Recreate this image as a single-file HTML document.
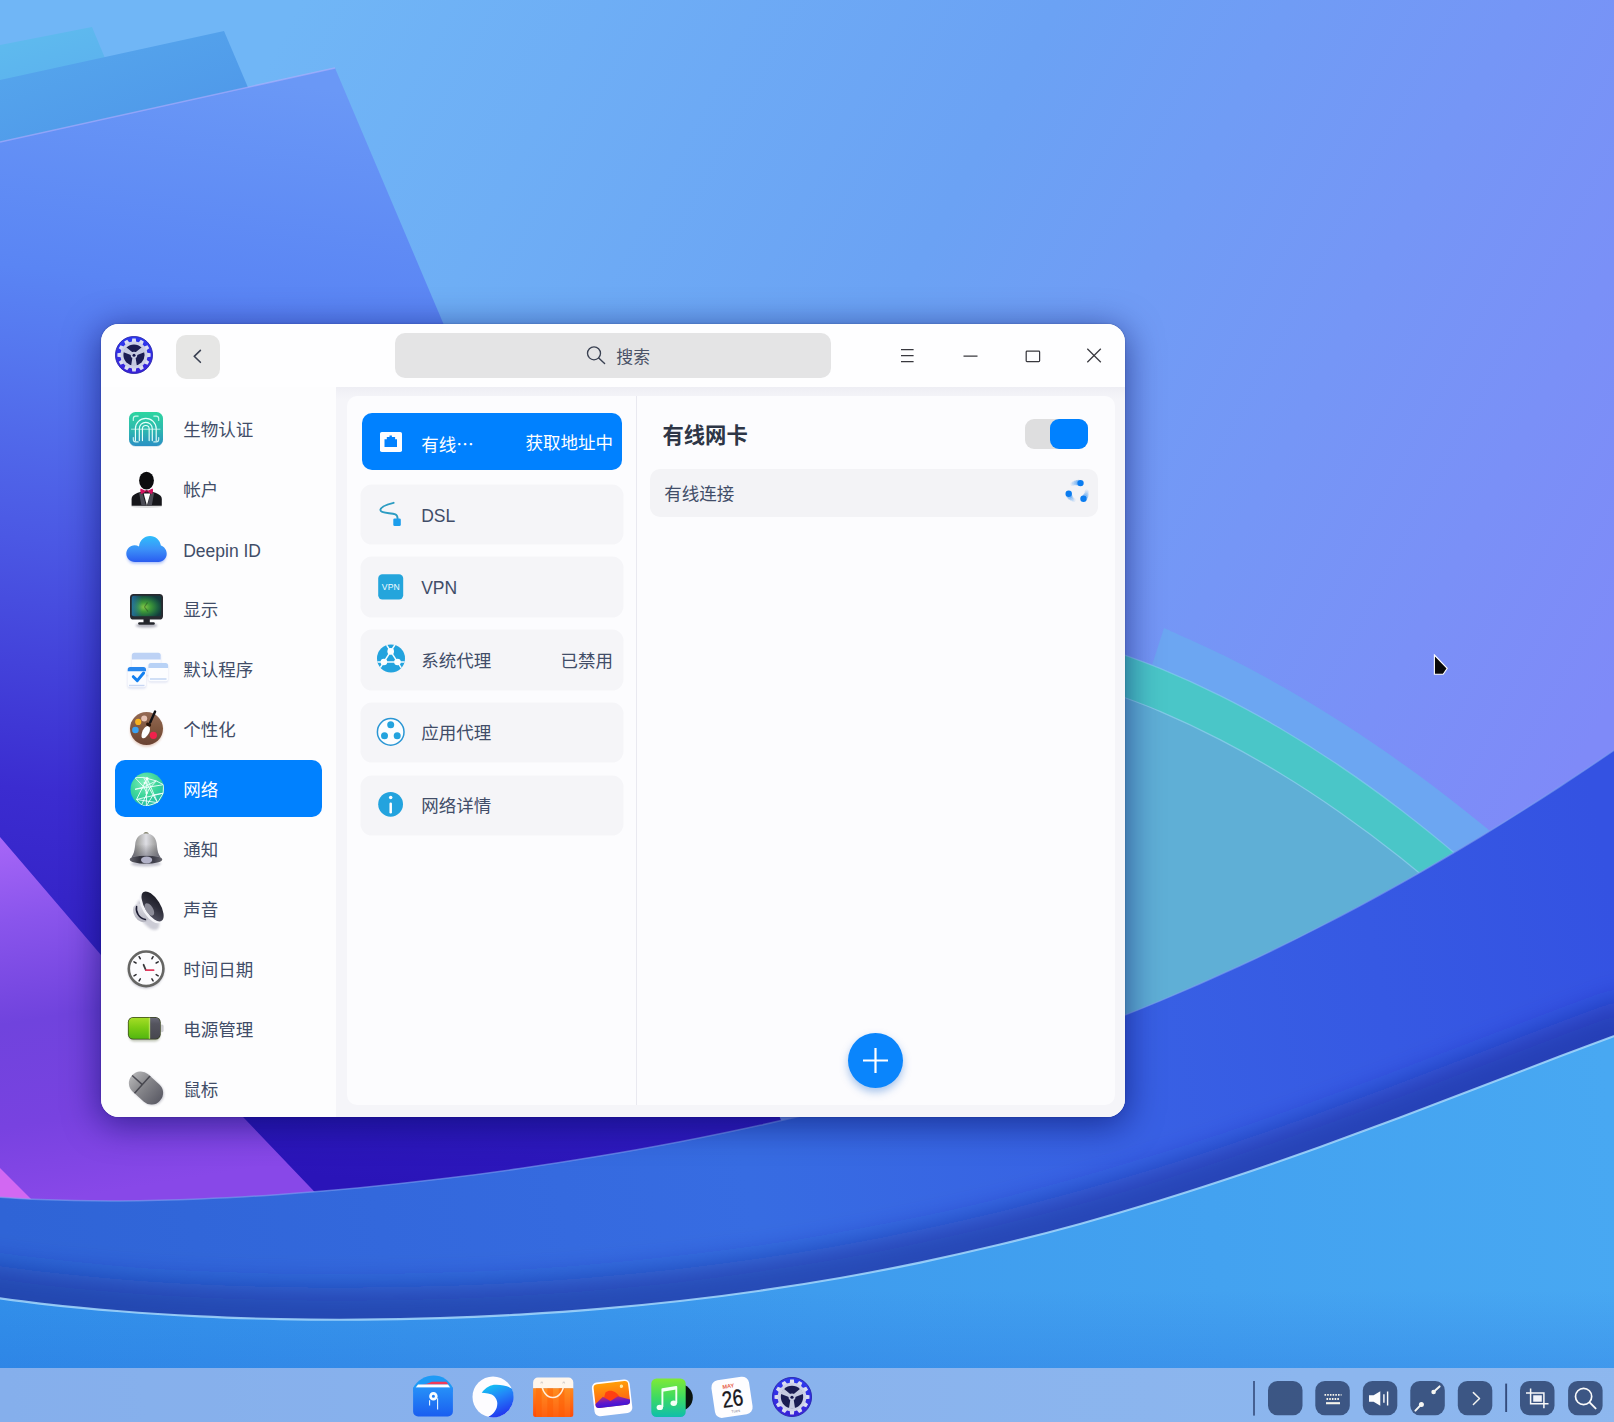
<!DOCTYPE html>
<html lang="zh-CN"><head><meta charset="utf-8"><title>控制中心 - 网络</title>
<style>
html,body{margin:0;padding:0}
body{width:1614px;height:1422px;overflow:hidden;position:relative;background:#6BA2F4;font-family:"Liberation Sans","Noto Sans CJK SC",sans-serif;font-size:17.5px;color:#414D68}
#wall{position:absolute;left:0;top:0;display:block}
.abs{position:absolute}
</style></head><body>
<svg id="wall" width="1614" height="1422" viewBox="0 0 1614 1422">
<defs>
<linearGradient id="gBase" gradientUnits="userSpaceOnUse" x1="300" y1="0" x2="1614" y2="700">
<stop offset="0" stop-color="#70B6F6"/><stop offset="0.45" stop-color="#6BA2F4"/><stop offset="1" stop-color="#7F8AF8"/>
</linearGradient>
<linearGradient id="gP3" gradientUnits="userSpaceOnUse" x1="0" y1="30" x2="40" y2="160">
<stop offset="0" stop-color="#5FBCEE"/><stop offset="1" stop-color="#58A8EE"/>
</linearGradient>
<linearGradient id="gP2" gradientUnits="userSpaceOnUse" x1="100" y1="30" x2="160" y2="200">
<stop offset="0" stop-color="#55A5EC"/><stop offset="1" stop-color="#4C92E8"/>
</linearGradient>
<linearGradient id="gP1" gradientUnits="userSpaceOnUse" x1="260" y1="80" x2="120" y2="1150">
<stop offset="0" stop-color="#6A98F6"/><stop offset="0.2" stop-color="#5A85F4"/><stop offset="0.45" stop-color="#4B58E4"/><stop offset="0.68" stop-color="#3B2CD0"/><stop offset="1" stop-color="#2A14B8"/>
</linearGradient>
<linearGradient id="gPur" gradientUnits="userSpaceOnUse" x1="0" y1="840" x2="60" y2="1200">
<stop offset="0" stop-color="#A666F7"/><stop offset="0.22" stop-color="#8A55EC"/><stop offset="0.5" stop-color="#7043DD"/><stop offset="0.78" stop-color="#7842E0"/><stop offset="1" stop-color="#8848E8"/>
</linearGradient>
<linearGradient id="gBand" gradientUnits="userSpaceOnUse" x1="0" y1="1200" x2="1614" y2="900">
<stop offset="0" stop-color="#2F64D6"/><stop offset="0.45" stop-color="#376CE2"/><stop offset="0.7" stop-color="#3860E4"/><stop offset="1" stop-color="#3452E2"/>
</linearGradient>
<linearGradient id="gLight" gradientUnits="userSpaceOnUse" x1="0" y1="1300" x2="1614" y2="1150">
<stop offset="0" stop-color="#3290EA"/><stop offset="0.5" stop-color="#3E9CEE"/><stop offset="1" stop-color="#48A8F2"/>
</linearGradient>
<linearGradient id="gLightSh" gradientUnits="userSpaceOnUse" x1="0" y1="1290" x2="0" y2="1370">
<stop offset="0" stop-color="#2060D8" stop-opacity="0"/><stop offset="1" stop-color="#2060D8" stop-opacity="0.22"/></linearGradient>
<linearGradient id="gBandSh" gradientUnits="userSpaceOnUse" x1="0" y1="1200" x2="0" y2="1320">
<stop offset="0" stop-color="#1B2E90" stop-opacity="0"/><stop offset="1" stop-color="#1B2E90" stop-opacity="0.45"/>
</linearGradient>
<filter id="fBlur" x="-10%" y="-30%" width="120%" height="160%"><feGaussianBlur stdDeviation="14"/></filter>
</defs>
<rect width="1614" height="1422" fill="url(#gBase)"/>
<polygon points="0,45 92,27 160,190 0,230" fill="url(#gP3)"/>
<polygon points="0,80 224,31 300,210 0,300" fill="url(#gP2)"/>
<polygon points="0,142 335,68 800,1165 0,1300" fill="url(#gP1)"/>
<path d="M0,142L335,68" stroke="#B9B0FF" stroke-opacity="0.55" stroke-width="1.6" fill="none"/>
<polygon points="0,837 101,955 244,1118 330,1208 0,1210" fill="url(#gPur)"/>
<polygon points="0,1168 32,1200 0,1204" fill="#D268F2"/>
<path d="M1164.0,627.9 C1174.0,632.5 1204.0,645.6 1224.0,655.6 C1244.0,665.5 1264.0,676.2 1284.0,687.6 C1304.0,699.0 1324.0,711.2 1344.0,724.0 C1364.0,736.9 1384.0,750.5 1404.0,764.8 C1424.0,779.1 1444.0,794.2 1464.0,809.9 C1484.0,825.7 1504.0,842.2 1524.0,859.4 C1544.0,876.7 1574.0,904.3 1584.0,913.3 L1572.0,962.2 C1562.0,952.5 1532.0,922.5 1512.0,903.9 C1492.0,885.4 1472.0,867.7 1452.0,850.9 C1432.0,834.1 1412.0,818.2 1392.0,803.2 C1372.0,788.2 1352.0,774.0 1332.0,760.7 C1312.0,747.5 1292.0,735.1 1272.0,723.6 C1252.0,712.1 1232.0,701.5 1212.0,691.7 C1192.0,682.0 1162.0,669.6 1152.0,665.2 Z" fill="#6CA6F2"/>
<path d="M1100.0,646.4 C1110.0,650.1 1140.0,660.2 1160.0,668.4 C1180.0,676.6 1200.0,685.7 1220.0,695.7 C1240.0,705.6 1260.0,716.5 1280.0,728.2 C1300.0,740.0 1320.0,752.6 1340.0,766.1 C1360.0,779.6 1380.0,794.0 1400.0,809.2 C1420.0,824.5 1440.0,840.7 1460.0,857.7 C1480.0,874.7 1510.0,902.5 1520.0,911.4 L1520.0,963.0 C1510.0,953.8 1480.0,925.0 1460.0,907.4 C1440.0,889.7 1420.0,873.0 1400.0,857.2 C1380.0,841.4 1360.0,826.5 1340.0,812.5 C1320.0,798.5 1300.0,785.4 1280.0,773.3 C1260.0,761.1 1240.0,749.9 1220.0,739.6 C1200.0,729.2 1180.0,719.8 1160.0,711.3 C1140.0,702.8 1110.0,692.4 1100.0,688.6 Z" fill="#4AC6C8"/>
<path d="M1100.0,688.6 C1110.0,692.4 1140.0,702.8 1160.0,711.3 C1180.0,719.8 1200.0,729.2 1220.0,739.6 C1240.0,749.9 1260.0,761.1 1280.0,773.3 C1300.0,785.4 1320.0,798.5 1340.0,812.5 C1360.0,826.5 1380.0,841.4 1400.0,857.2 C1420.0,873.0 1440.0,889.7 1460.0,907.4 C1480.0,925.0 1510.0,953.8 1520.0,963.0 L1600,1200 L1100,1200 Z" fill="#5FAFD6"/>
<path d="M1100.0,646.4 C1110.0,650.1 1140.0,660.2 1160.0,668.4 C1180.0,676.6 1200.0,685.7 1220.0,695.7 C1240.0,705.6 1260.0,716.5 1280.0,728.2 C1300.0,740.0 1320.0,752.6 1340.0,766.1 C1360.0,779.6 1380.0,794.0 1400.0,809.2 C1420.0,824.5 1440.0,840.7 1460.0,857.7 C1480.0,874.7 1510.0,902.5 1520.0,911.4" fill="none" stroke="#8FD8F4" stroke-opacity="0.5" stroke-width="1.3"/>
<path d="M1100.0,688.6 C1110.0,692.4 1140.0,702.8 1160.0,711.3 C1180.0,719.8 1200.0,729.2 1220.0,739.6 C1240.0,749.9 1260.0,761.1 1280.0,773.3 C1300.0,785.4 1320.0,798.5 1340.0,812.5 C1360.0,826.5 1380.0,841.4 1400.0,857.2 C1420.0,873.0 1440.0,889.7 1460.0,907.4 C1480.0,925.0 1510.0,953.8 1520.0,963.0" fill="none" stroke="#9AE0F0" stroke-opacity="0.55" stroke-width="1.3"/>
<path d="M-40.0,1194.2 C-26.7,1195.1 13.3,1198.5 40.0,1199.6 C66.7,1200.7 93.3,1201.0 120.0,1200.9 C146.7,1200.8 173.3,1200.1 200.0,1199.0 C226.7,1198.0 253.3,1196.4 280.0,1194.5 C306.7,1192.6 333.3,1190.3 360.0,1187.8 C386.7,1185.2 413.3,1182.3 440.0,1179.1 C466.7,1175.9 493.3,1172.4 520.0,1168.5 C546.7,1164.7 573.3,1160.6 600.0,1156.1 C626.7,1151.7 653.3,1146.9 680.0,1141.8 C706.7,1136.6 733.3,1131.2 760.0,1125.3 C786.7,1119.4 813.3,1113.1 840.0,1106.4 C866.7,1099.6 893.3,1092.4 920.0,1084.7 C946.7,1077.0 973.3,1068.9 1000.0,1060.2 C1026.7,1051.4 1053.3,1042.2 1080.0,1032.3 C1106.7,1022.4 1133.3,1012.0 1160.0,1000.9 C1186.7,989.8 1213.3,978.1 1240.0,965.8 C1266.7,953.4 1293.3,940.4 1320.0,926.7 C1346.7,913.1 1373.3,898.8 1400.0,883.8 C1426.7,868.8 1453.3,853.2 1480.0,837.0 C1506.7,820.8 1533.3,803.9 1560.0,786.5 C1586.7,769.1 1626.7,741.7 1640.0,732.7 L1700,1500 L-60,1500 Z" fill="url(#gBand)"/>
<path d="M-40.0,1292.8 C-26.7,1294.6 13.3,1300.5 40.0,1303.6 C66.7,1306.7 93.3,1309.2 120.0,1311.3 C146.7,1313.5 173.3,1315.1 200.0,1316.4 C226.7,1317.7 253.3,1318.5 280.0,1319.1 C306.7,1319.6 333.3,1319.8 360.0,1319.6 C386.7,1319.5 413.3,1319.0 440.0,1318.1 C466.7,1317.3 493.3,1316.1 520.0,1314.6 C546.7,1313.0 573.3,1311.2 600.0,1308.9 C626.7,1306.6 653.3,1304.0 680.0,1301.0 C706.7,1298.0 733.3,1294.6 760.0,1290.7 C786.7,1286.9 813.3,1282.7 840.0,1278.0 C866.7,1273.3 893.3,1268.2 920.0,1262.6 C946.7,1257.0 973.3,1251.0 1000.0,1244.6 C1026.7,1238.1 1053.3,1231.2 1080.0,1223.9 C1106.7,1216.5 1133.3,1208.7 1160.0,1200.5 C1186.7,1192.4 1213.3,1183.7 1240.0,1174.8 C1266.7,1165.9 1293.3,1156.5 1320.0,1147.0 C1346.7,1137.4 1373.3,1127.5 1400.0,1117.5 C1426.7,1107.5 1453.3,1097.2 1480.0,1087.0 C1506.7,1076.8 1533.3,1066.4 1560.0,1056.3 C1586.7,1046.2 1626.7,1031.4 1640.0,1026.5" fill="none" stroke="#16288C" stroke-opacity="0.5" stroke-width="64" filter="url(#fBlur)"/>
<path d="M-40.0,1194.2 C-26.7,1195.1 13.3,1198.5 40.0,1199.6 C66.7,1200.7 93.3,1201.0 120.0,1200.9 C146.7,1200.8 173.3,1200.1 200.0,1199.0 C226.7,1198.0 253.3,1196.4 280.0,1194.5 C306.7,1192.6 333.3,1190.3 360.0,1187.8 C386.7,1185.2 413.3,1182.3 440.0,1179.1 C466.7,1175.9 493.3,1172.4 520.0,1168.5 C546.7,1164.7 573.3,1160.6 600.0,1156.1 C626.7,1151.7 653.3,1146.9 680.0,1141.8 C706.7,1136.6 733.3,1131.2 760.0,1125.3 C786.7,1119.4 813.3,1113.1 840.0,1106.4 C866.7,1099.6 893.3,1092.4 920.0,1084.7 C946.7,1077.0 973.3,1068.9 1000.0,1060.2 C1026.7,1051.4 1053.3,1042.2 1080.0,1032.3 C1106.7,1022.4 1133.3,1012.0 1160.0,1000.9 C1186.7,989.8 1213.3,978.1 1240.0,965.8 C1266.7,953.4 1293.3,940.4 1320.0,926.7 C1346.7,913.1 1373.3,898.8 1400.0,883.8 C1426.7,868.8 1453.3,853.2 1480.0,837.0 C1506.7,820.8 1533.3,803.9 1560.0,786.5 C1586.7,769.1 1626.7,741.7 1640.0,732.7" fill="none" stroke="#7FA0F0" stroke-opacity="0.6" stroke-width="1.5"/>
<path d="M-40.0,1292.8 C-26.7,1294.6 13.3,1300.5 40.0,1303.6 C66.7,1306.7 93.3,1309.2 120.0,1311.3 C146.7,1313.5 173.3,1315.1 200.0,1316.4 C226.7,1317.7 253.3,1318.5 280.0,1319.1 C306.7,1319.6 333.3,1319.8 360.0,1319.6 C386.7,1319.5 413.3,1319.0 440.0,1318.1 C466.7,1317.3 493.3,1316.1 520.0,1314.6 C546.7,1313.0 573.3,1311.2 600.0,1308.9 C626.7,1306.6 653.3,1304.0 680.0,1301.0 C706.7,1298.0 733.3,1294.6 760.0,1290.7 C786.7,1286.9 813.3,1282.7 840.0,1278.0 C866.7,1273.3 893.3,1268.2 920.0,1262.6 C946.7,1257.0 973.3,1251.0 1000.0,1244.6 C1026.7,1238.1 1053.3,1231.2 1080.0,1223.9 C1106.7,1216.5 1133.3,1208.7 1160.0,1200.5 C1186.7,1192.4 1213.3,1183.7 1240.0,1174.8 C1266.7,1165.9 1293.3,1156.5 1320.0,1147.0 C1346.7,1137.4 1373.3,1127.5 1400.0,1117.5 C1426.7,1107.5 1453.3,1097.2 1480.0,1087.0 C1506.7,1076.8 1533.3,1066.4 1560.0,1056.3 C1586.7,1046.2 1626.7,1031.4 1640.0,1026.5 L1700,1500 L-60,1500 Z" fill="url(#gLight)"/>
<path d="M-40.0,1292.8 C-26.7,1294.6 13.3,1300.5 40.0,1303.6 C66.7,1306.7 93.3,1309.2 120.0,1311.3 C146.7,1313.5 173.3,1315.1 200.0,1316.4 C226.7,1317.7 253.3,1318.5 280.0,1319.1 C306.7,1319.6 333.3,1319.8 360.0,1319.6 C386.7,1319.5 413.3,1319.0 440.0,1318.1 C466.7,1317.3 493.3,1316.1 520.0,1314.6 C546.7,1313.0 573.3,1311.2 600.0,1308.9 C626.7,1306.6 653.3,1304.0 680.0,1301.0 C706.7,1298.0 733.3,1294.6 760.0,1290.7 C786.7,1286.9 813.3,1282.7 840.0,1278.0 C866.7,1273.3 893.3,1268.2 920.0,1262.6 C946.7,1257.0 973.3,1251.0 1000.0,1244.6 C1026.7,1238.1 1053.3,1231.2 1080.0,1223.9 C1106.7,1216.5 1133.3,1208.7 1160.0,1200.5 C1186.7,1192.4 1213.3,1183.7 1240.0,1174.8 C1266.7,1165.9 1293.3,1156.5 1320.0,1147.0 C1346.7,1137.4 1373.3,1127.5 1400.0,1117.5 C1426.7,1107.5 1453.3,1097.2 1480.0,1087.0 C1506.7,1076.8 1533.3,1066.4 1560.0,1056.3 C1586.7,1046.2 1626.7,1031.4 1640.0,1026.5 L1700,1500 L-60,1500 Z" fill="url(#gLightSh)"/>
<path d="M-40.0,1292.8 C-26.7,1294.6 13.3,1300.5 40.0,1303.6 C66.7,1306.7 93.3,1309.2 120.0,1311.3 C146.7,1313.5 173.3,1315.1 200.0,1316.4 C226.7,1317.7 253.3,1318.5 280.0,1319.1 C306.7,1319.6 333.3,1319.8 360.0,1319.6 C386.7,1319.5 413.3,1319.0 440.0,1318.1 C466.7,1317.3 493.3,1316.1 520.0,1314.6 C546.7,1313.0 573.3,1311.2 600.0,1308.9 C626.7,1306.6 653.3,1304.0 680.0,1301.0 C706.7,1298.0 733.3,1294.6 760.0,1290.7 C786.7,1286.9 813.3,1282.7 840.0,1278.0 C866.7,1273.3 893.3,1268.2 920.0,1262.6 C946.7,1257.0 973.3,1251.0 1000.0,1244.6 C1026.7,1238.1 1053.3,1231.2 1080.0,1223.9 C1106.7,1216.5 1133.3,1208.7 1160.0,1200.5 C1186.7,1192.4 1213.3,1183.7 1240.0,1174.8 C1266.7,1165.9 1293.3,1156.5 1320.0,1147.0 C1346.7,1137.4 1373.3,1127.5 1400.0,1117.5 C1426.7,1107.5 1453.3,1097.2 1480.0,1087.0 C1506.7,1076.8 1533.3,1066.4 1560.0,1056.3 C1586.7,1046.2 1626.7,1031.4 1640.0,1026.5" fill="none" stroke="#A6D8FC" stroke-opacity="0.85" stroke-width="2.1"/>
</svg>

<div id="dock" class="abs" style="left:0;top:1367.5px;width:1614px;height:54.5px;background:rgba(206,210,240,0.55)"></div>
<div class="abs" style="left:408.7px;top:1372.4px;width:48px;height:48px"><svg width="48" height="48" viewBox="0 0 48 48"><defs><linearGradient id="dfA" x1="0" y1="0" x2="0" y2="1"><stop offset="0" stop-color="#2690F8"/><stop offset="1" stop-color="#1A5EF0"/></linearGradient></defs>
<path d="M4.1,20V16C8,8 17,3.5 24.8,3.5C33,3.5 40,8 43.9,16V20Z" fill="#1E9AF6"/>
<path d="M18,11.8L22.9,9.7H37.3L39.5,12.6H12Z" fill="#F03A5A"/>
<path d="M9,12.4H39L41.3,15.8H6.6Z" fill="#FDFDFF"/>
<path d="M4.1,15.4H43.9V39.5a5,5 0 0 1 -5,5H9.1a5,5 0 0 1 -5,-5Z" fill="url(#dfA)"/>
<circle cx="24.4" cy="24.2" r="2.9" fill="none" stroke="#FAFEFF" stroke-width="2.7"/>
<path d="M20.6,28.3V33.4M28.6,26.2V37.5" stroke="#E8F6FF" stroke-width="1.1" fill="none"/>
</svg></div>
<div class="abs" style="left:468.6px;top:1372.6px;width:48px;height:48px"><svg width="48" height="48" viewBox="0 0 48 48"><defs><linearGradient id="dbA" x1="0.2" y1="0" x2="0.6" y2="1"><stop offset="0" stop-color="#12C4F2"/><stop offset="0.4" stop-color="#2288F8"/><stop offset="1" stop-color="#2230EE"/></linearGradient></defs>
<circle cx="24" cy="23.9" r="20.5" fill="#FDFCFF"/>
<path d="M12.7,19.8C17,14 22,11.6 27.5,11.8C33,12 39,13 43,15.8A20.5,20.5 0 0 1 19.2,43.8C25,41 28.5,36 28.3,30C28.1,25.5 24.5,21 19,20.4C16.5,20.1 14.5,20 12.7,19.8Z" fill="url(#dbA)"/>
</svg></div>
<div class="abs" style="left:528.5px;top:1372.5px;width:48px;height:48px"><svg width="48" height="48" viewBox="0 0 48 48"><defs><linearGradient id="dsA" x1="0" y1="0" x2="0" y2="1"><stop offset="0" stop-color="#FF8A1C"/><stop offset="1" stop-color="#FF4808"/></linearGradient><clipPath id="dsC"><path d="M4.1,15.2H44.3V41.6a2.5,2.5 0 0 1 -2.5,2.5H6.6a2.5,2.5 0 0 1 -2.5,-2.5Z"/></clipPath></defs>
<path d="M4.1,15.6V9.4a4.8,4.8 0 0 1 4.8,-4.8H39.5a4.8,4.8 0 0 1 4.8,4.8V15.6Z" fill="#FFF6EC"/>
<g clip-path="url(#dsC)"><rect x="4" y="15" width="41" height="30" fill="url(#dsA)"/><path d="M9.8,15V45M21.2,15V45M32.6,15V45" stroke="#FF6A0C" stroke-width="5.7" opacity="0.55"/><path d="M15.5,15V45M26.9,15V45M38.3,15V45" stroke="#FFA030" stroke-width="5.7" opacity="0.25"/></g>
<circle cx="12.8" cy="9.9" r="1.3" fill="#D8D0CC"/><circle cx="34.8" cy="9.9" r="1.3" fill="#D8D0CC"/>
<path d="M12.8,9.9C12.8,18 17.5,24.6 23.8,24.6C30.1,24.6 34.8,18 34.8,9.9" fill="none" stroke="#FFF4E6" stroke-width="1.5" opacity="0.95"/>
</svg></div>
<div class="abs" style="left:588.4px;top:1372.5px;width:48px;height:48px"><svg width="48" height="48" viewBox="0 0 48 48"><defs><linearGradient id="diA" x1="0" y1="0" x2="0" y2="1"><stop offset="0" stop-color="#FFA008"/><stop offset="0.6" stop-color="#FF7410"/><stop offset="1" stop-color="#F0502A"/></linearGradient><linearGradient id="diB" x1="0" y1="0" x2="0" y2="1"><stop offset="0" stop-color="#C0306A"/><stop offset="0.5" stop-color="#6418C8"/><stop offset="1" stop-color="#3412DC"/></linearGradient><clipPath id="diC"><rect x="-17.3" y="-15.2" width="34.8" height="23.8" rx="3.6"/></clipPath></defs>
<g transform="translate(24.1,24.8) rotate(-6.5)">
<rect x="-19" y="-16.9" width="38" height="33.8" rx="5.2" fill="#FFFDFF"/>
<g clip-path="url(#diC)"><rect x="-18" y="-16" width="36" height="25" fill="url(#diA)"/>
<path d="M-6,-6C-1,-9 5,-6 8,1L-10,4Z" fill="#FF3A12" opacity="0.9"/>
<path d="M-18,5L-9,-2L-2,3L6,-1L18,4V10H-18Z" fill="url(#diB)"/>
<circle cx="10.6" cy="-10.4" r="1.7" fill="#FFE9A0"/></g>
</g></svg></div>
<div class="abs" style="left:648.3px;top:1372.5px;width:48px;height:48px"><svg width="48" height="48" viewBox="0 0 48 48"><defs><linearGradient id="dmA" x1="0" y1="0" x2="0" y2="1"><stop offset="0" stop-color="#80EA36"/><stop offset="0.5" stop-color="#3CDA62"/><stop offset="1" stop-color="#0EBEAC"/></linearGradient></defs>
<circle cx="31.4" cy="24.4" r="13.4" fill="#0A1410"/>
<rect x="3.3" y="5.4" width="34.4" height="38.7" rx="5.2" fill="url(#dmA)"/>
<path d="M14.4,34V16.2L28.3,14V30" fill="none" stroke="#F4FFF6" stroke-width="1.9" stroke-linejoin="round"/>
<path d="M14.4,16.2L28.3,14V16.6L14.4,18.8Z" fill="#F4FFF6"/>
<ellipse cx="11.8" cy="34.4" rx="3.2" ry="2.7" fill="#F4FFF6"/><ellipse cx="25.7" cy="30.3" rx="3.2" ry="2.7" fill="#F4FFF6"/>
</svg></div>
<div class="abs" style="left:708.2px;top:1372.5px;width:48px;height:48px"><svg width="48" height="48" viewBox="0 0 48 48"><g transform="translate(24,24.3) rotate(-8.5)" font-family="Liberation Sans, sans-serif" text-anchor="middle">
<rect x="-19" y="-19" width="38" height="38" rx="7" fill="#FEFDFF"/>
<text x="-2" y="-9.6" font-size="5.6" font-weight="700" fill="#E8644C">MAY</text>
<text x="0.4" y="9.2" font-size="23" fill="#16161C" stroke="#16161C" stroke-width="0.35" transform="scale(0.82,1)">26</text>
<text x="1.6" y="15.4" font-size="4" fill="#8A8A94">Tues</text>
</g></svg></div>
<div class="abs" style="left:772.2px;top:1376.9px;width:40px;height:40px"><svg width="100%" height="100%" viewBox="0 0 38 38"><defs><linearGradient id="sgA" x1="0" y1="0" x2="0" y2="1"><stop offset="0" stop-color="#2C3AF0"/><stop offset="1" stop-color="#3A22D8"/></linearGradient></defs>
<circle cx="19" cy="19" r="18.6" fill="url(#sgA)" stroke="#2420A8" stroke-width="0.8"/>
<path d="M16.78,5.89 L17.25,2.39 L20.75,2.39 L21.22,5.89 L23.64,6.53 L25.79,3.74 L28.82,5.49 L27.48,8.75 L29.25,10.52 L32.51,9.18 L34.26,12.21 L31.47,14.36 L32.11,16.78 L35.61,17.25 L35.61,20.75 L32.11,21.22 L31.47,23.64 L34.26,25.79 L32.51,28.82 L29.25,27.48 L27.48,29.25 L28.82,32.51 L25.79,34.26 L23.64,31.47 L21.22,32.11 L20.75,35.61 L17.25,35.61 L16.78,32.11 L14.36,31.47 L12.21,34.26 L9.18,32.51 L10.52,29.25 L8.75,27.48 L5.49,28.82 L3.74,25.79 L6.53,23.64 L5.89,21.22 L2.39,20.75 L2.39,17.25 L5.89,16.78 L6.53,14.36 L3.74,12.21 L5.49,9.18 L8.75,10.52 L10.52,8.75 L9.18,5.49 L12.21,3.74 L14.36,6.53Z" fill="#DADDF2"/>
<circle cx="19" cy="19" r="13.5" fill="#CDD1E8"/>
<circle cx="19" cy="19" r="10.6" fill="#1A1C52"/>
<path d="M17.80,19.00 L16.10,30.00 L21.90,30.00 L20.20,19.00Z M19.60,17.96 L10.92,10.99 L8.02,16.01 L18.40,20.04Z M19.60,20.04 L29.98,16.01 L27.08,10.99 L18.40,17.96Z" fill="#C4C9E0"/>
<circle cx="19" cy="19" r="3.3" fill="#C4C9E0"/>
<circle cx="19" cy="19.2" r="1.5" fill="#14164E"/>
</svg></div>
<svg class="abs" style="left:1240px;top:1372px" width="374" height="50" viewBox="1240 1372 374 50">
<g fill="#38527F" fill-opacity="0.96">
<rect x="1253.2" y="1381" width="1.6" height="34.6" fill="#304878"/>
<rect x="1268" y="1380.9" width="34.5" height="34.3" rx="9.5"/>
<rect x="1315.3" y="1380.9" width="34.5" height="34.3" rx="9.5"/>
<rect x="1362.8" y="1380.9" width="34.5" height="34.3" rx="9.5"/>
<rect x="1410.3" y="1380.9" width="34.5" height="34.3" rx="9.5"/>
<rect x="1457.8" y="1380.9" width="34.5" height="34.3" rx="9.5"/>
<rect x="1505.2" y="1383.6" width="1.9" height="28.4" fill="#304878"/>
<rect x="1520" y="1380.9" width="34.5" height="34.3" rx="9.5"/>
<rect x="1568.1" y="1380.9" width="34.5" height="34.3" rx="9.5"/>
</g>
<g fill="none" stroke="#F6F4EA" stroke-width="1.9">
<path d="M1324.5,1394.9H1341.5M1326.5,1399H1339.5" stroke-dasharray="1.6 1.1"/>
<path d="M1326,1403.2H1340" stroke-width="2.1"/>
</g>
<path d="M1369,1395.2H1373.6L1380.3,1391.2V1405.8L1373.6,1401.8H1369Z" fill="#FDFDFD"/>
<path d="M1383.9,1394.2V1402.8M1387.6,1391.6V1405.4" stroke="#FDFDFD" stroke-width="1.4" fill="none"/>
<g stroke="#F6F6F2" stroke-width="2" stroke-linecap="round" fill="#F6F6F2">
<path d="M1434.6,1391L1439.6,1386.4M1420.4,1405.4L1415.4,1410.6"/>
<circle cx="1433.6" cy="1392" r="2.3" stroke="none"/><circle cx="1421.4" cy="1404.4" r="2.5" stroke="none"/>
</g>
<polyline points="1473.4,1392.6 1479.5,1398.5 1473.4,1404.5" fill="none" stroke="#F4F4F0" stroke-width="1.5" stroke-linecap="round" stroke-linejoin="round"/>
<g fill="none" stroke="#F8F8F8" stroke-width="1.5"><path d="M1530.6,1388.6V1403.8H1548.5M1526,1393H1543.9V1408.2"/></g>
<rect x="1533.2" y="1395.3" width="8.6" height="6.4" fill="#F2F4FA"/>
<circle cx="1583.6" cy="1396.5" r="8.1" fill="none" stroke="#FAFAFA" stroke-width="1.7"/>
<path d="M1589.6,1402.4L1595.6,1408.4" stroke="#FAFAFA" stroke-width="1.9" stroke-linecap="round"/>
</svg>

<div id="win" class="abs" style="left:101px;top:324px;width:1024px;height:793px;border-radius:18px;background:#FAFAFB;box-shadow:0 6px 34px 2px rgba(0,8,90,0.55),0 0 2px rgba(0,0,40,0.3);overflow:hidden">
<style>
#win .tb{position:absolute;left:0;top:0;width:1024px;height:62.5px;background:#FEFEFF}
#win .side{position:absolute;left:0;top:62.5px;width:235px;height:731px;background:#FDFDFE}
#win .content{position:absolute;left:234.5px;top:62.5px;width:790px;height:731px;background:linear-gradient(180deg,#EEEEF4 0,#F5F5F9 12px,#F5F5F9 100%)}
#win .col2{position:absolute;left:246px;top:71.5px;width:289px;height:709px;background:#FCFCFE;border-radius:10px 0 0 10px}
#win .col3{position:absolute;left:535px;top:71.5px;width:479px;height:709px;background:#FCFCFE;border-radius:0 10px 10px 0;border-left:1px solid #E9E9F0;box-sizing:border-box}
.sitem{position:absolute;left:14px;width:207px;height:57px;border-radius:10px;line-height:57px;white-space:nowrap}
.sitem .ic{position:absolute;left:7px;top:5px;width:48px;height:48px}
.sitem .tx{position:absolute;left:68.2px;top:2px}
.sitem.sel{background:#0081FF;color:#fff}
.mitem{position:absolute;left:261px;width:260px;height:57.5px;border-radius:10px;background:#F5F5F8;box-shadow:0 0 0 1.5px #F5F5F8;line-height:57.5px;white-space:nowrap}
.mitem .ic{position:absolute;left:12px;top:12px;width:34px;height:34px}
.mitem .tx{position:absolute;left:59.2px;top:1.6px}
.mitem .rt{position:absolute;right:9px;top:1.6px}
.mitem.sel{background:#0081FF;color:#fff;box-shadow:none;height:57px}
</style>
<div class="tb"></div>
<div class="side"></div>
<div class="content"></div>
<div class="col2"></div>
<div class="col3"></div>

<!-- title bar -->
<div class="abs" style="left:14px;top:12px;width:38px;height:38px"><svg width="100%" height="100%" viewBox="0 0 38 38"><defs><linearGradient id="sgA" x1="0" y1="0" x2="0" y2="1"><stop offset="0" stop-color="#2C3AF0"/><stop offset="1" stop-color="#3A22D8"/></linearGradient></defs>
<circle cx="19" cy="19" r="18.6" fill="url(#sgA)" stroke="#2420A8" stroke-width="0.8"/>
<path d="M16.78,5.89 L17.25,2.39 L20.75,2.39 L21.22,5.89 L23.64,6.53 L25.79,3.74 L28.82,5.49 L27.48,8.75 L29.25,10.52 L32.51,9.18 L34.26,12.21 L31.47,14.36 L32.11,16.78 L35.61,17.25 L35.61,20.75 L32.11,21.22 L31.47,23.64 L34.26,25.79 L32.51,28.82 L29.25,27.48 L27.48,29.25 L28.82,32.51 L25.79,34.26 L23.64,31.47 L21.22,32.11 L20.75,35.61 L17.25,35.61 L16.78,32.11 L14.36,31.47 L12.21,34.26 L9.18,32.51 L10.52,29.25 L8.75,27.48 L5.49,28.82 L3.74,25.79 L6.53,23.64 L5.89,21.22 L2.39,20.75 L2.39,17.25 L5.89,16.78 L6.53,14.36 L3.74,12.21 L5.49,9.18 L8.75,10.52 L10.52,8.75 L9.18,5.49 L12.21,3.74 L14.36,6.53Z" fill="#DADDF2"/>
<circle cx="19" cy="19" r="13.5" fill="#CDD1E8"/>
<circle cx="19" cy="19" r="10.6" fill="#1A1C52"/>
<path d="M17.80,19.00 L16.10,30.00 L21.90,30.00 L20.20,19.00Z M19.60,17.96 L10.92,10.99 L8.02,16.01 L18.40,20.04Z M19.60,20.04 L29.98,16.01 L27.08,10.99 L18.40,17.96Z" fill="#C4C9E0"/>
<circle cx="19" cy="19" r="3.3" fill="#C4C9E0"/>
<circle cx="19" cy="19.2" r="1.5" fill="#14164E"/>
</svg></div>
<div class="abs" style="left:75.3px;top:11px;width:43.5px;height:43.6px;border-radius:10px;background:#E6E6E5">
<svg width="43.5" height="43.6" viewBox="0 0 43.5 43.6"><polyline points="24.4,15.4 18.2,21.3 24.4,27.3" fill="none" stroke="#3A4152" stroke-width="1.6" stroke-linecap="round" stroke-linejoin="round"/></svg></div>
<div class="abs" style="left:294px;top:9px;width:436px;height:44.5px;border-radius:10px;background:#E4E4E5">
<svg class="abs" style="left:188px;top:10px" width="24" height="24" viewBox="0 0 24 24"><circle cx="11" cy="10.3" r="6.5" fill="none" stroke="#3A4152" stroke-width="1.35"/><line x1="15.7" y1="15" x2="21.6" y2="20.6" stroke="#3A4152" stroke-width="1.4" stroke-linecap="round"/></svg>
<div class="abs" style="left:221.3px;top:1.6px;line-height:45px;font-size:16.9px;color:#4A5266">搜索</div>
</div>
<svg class="abs" style="left:790px;top:15px" width="220" height="34" viewBox="0 0 220 34" fill="none" stroke="#38383E" stroke-width="1.25">
<line x1="10" y1="10.6" x2="22.6" y2="10.6"/><line x1="10" y1="16.6" x2="22.6" y2="16.6"/><line x1="10" y1="22.6" x2="22.6" y2="22.6"/>
<line x1="72.5" y1="17" x2="86.5" y2="17"/>
<rect x="135.2" y="12.2" width="13.4" height="10.4" rx="0.8"/>
<line x1="196.3" y1="9.8" x2="209.8" y2="23.2"/><line x1="209.8" y1="9.8" x2="196.3" y2="23.2"/>
</svg>

<!-- sidebar -->
<div class="sitem" style="top:76px"><div class="ic"><svg width="100%" height="100%" viewBox="0 0 48 48"><defs><linearGradient id="fgA" x1="0" y1="0" x2="0" y2="1"><stop offset="0" stop-color="#2ED6A0"/><stop offset="0.55" stop-color="#2DB6B0"/><stop offset="1" stop-color="#2A90C4"/></linearGradient></defs>
<rect x="7" y="7.6" width="34" height="34" rx="6.5" fill="#2A7FB0" opacity="0.35"/>
<rect x="7" y="7" width="34" height="34" rx="6.5" fill="url(#fgA)"/>
<g fill="none" stroke="#E8FFFA" stroke-width="1.15" stroke-linecap="round">
<path d="M11.3,15.5V13.5a2.4,2.4 0 0 1 2.4,-2.4H16.2M31.8,11.1H34.3a2.4,2.4 0 0 1 2.4,2.4V15.5M36.7,32.5V34.5a2.4,2.4 0 0 1 -2.4,2.4H31.8M16.2,36.9H13.7a2.4,2.4 0 0 1 -2.4,-2.4V32.5" stroke-opacity="0.85"/>
<path d="M13.4,35.6V23.8a10.4,10.4 0 0 1 20.8,0V35.6"/>
<path d="M17.3,35.6V23.8a6.5,6.5 0 0 1 13,0V35.6"/>
<path d="M20.45,35.6V23.8a3.35,3.35 0 0 1 6.7,0V35.6"/>
<path d="M9.5,24.2H38" stroke-width="0.9" stroke-opacity="0.8"/>
</g></svg></div><span class="tx">生物认证</span></div>
<div class="sitem" style="top:136px"><div class="ic"><svg width="100%" height="100%" viewBox="0 0 48 48">
<ellipse cx="24.6" cy="41.6" rx="15.5" ry="1.4" fill="#000" opacity="0.12"/>
<path d="M9.6,40.8V34.2C9.6,30.4 12.6,28.9 17.5,27.3L24.6,25.6L31.7,27.3C36.6,28.9 39.8,30.4 39.8,34.2V40.8Z" fill="#16161A"/>
<path d="M17.2,28.2L20.2,27.6L24,40.6H19.5Z" fill="#4C4C55"/>
<path d="M32,28.2L29,27.6L25.4,40.6H29.8Z" fill="#4C4C55"/>
<path d="M21.7,28.4H28.3L24.9,40.4Z" fill="#FDFDFD"/>
<ellipse cx="24.5" cy="15.6" rx="7.4" ry="8.9" fill="#0C0C0E"/>
<path d="M24.6,26.2L18.6,23.6C18,25.3 18.2,27.6 19.4,29.2ZM24.6,26.2L30.6,23.6C31.4,25.3 31.2,27.6 29.8,29.2Z" fill="#D0125E"/>
<circle cx="24.6" cy="26.2" r="1.3" fill="#8A0C40"/>
</svg></div><span class="tx">帐户</span></div>
<div class="sitem" style="top:196px"><div class="ic"><svg width="100%" height="100%" viewBox="0 0 48 48"><defs><linearGradient id="clA" x1="0" y1="0" x2="0" y2="1"><stop offset="0" stop-color="#2FBEFB"/><stop offset="0.5" stop-color="#3C92F8"/><stop offset="1" stop-color="#2A5CF0"/></linearGradient>
<filter id="clB" x="-20%" y="-20%" width="140%" height="160%"><feGaussianBlur stdDeviation="1.6"/></filter></defs>
<path d="M13,38.5C8,38.5 5.3,35 5.3,31C5.3,27 8,24 12.6,24H36.5C41,24 43.7,27 43.7,31C43.7,35 41,38.5 36.5,38.5Z" fill="#3A6CF0" opacity="0.45" filter="url(#clB)"/>
<path d="M13,37C8,37 4.3,33.2 4.3,28.6C4.3,24 8,20.2 12.6,20.2C14.2,20.2 15.7,20.6 17,21.4C17.6,15.6 22.2,11 28,11C33.6,11 38.2,15.2 38.9,20.6C42.3,21.8 44.7,25 44.7,28.8C44.7,33.4 41,37 36.5,37Z" fill="url(#clA)"/>
</svg></div><span class="tx" style="top:3px">Deepin ID</span></div>
<div class="sitem" style="top:256px"><div class="ic"><svg width="100%" height="100%" viewBox="0 0 48 48"><defs><radialGradient id="dpA" cx="0.42" cy="0.55" r="0.62"><stop offset="0" stop-color="#86C848"/><stop offset="0.35" stop-color="#3F9A38"/><stop offset="0.75" stop-color="#1C6040"/><stop offset="1" stop-color="#143A3C"/></radialGradient>
<linearGradient id="dpB" x1="0" y1="0" x2="1" y2="0"><stop offset="0" stop-color="#2878B8" stop-opacity="0.75"/><stop offset="0.35" stop-color="#2878B8" stop-opacity="0"/></linearGradient>
<filter id="dpC" x="-20%" y="-50%" width="140%" height="200%"><feGaussianBlur stdDeviation="1.3"/></filter></defs>
<ellipse cx="24.5" cy="40.5" rx="11" ry="2" fill="#202040" opacity="0.35" filter="url(#dpC)"/>
<rect x="21.5" y="33" width="6.3" height="5.5" fill="#22242A"/>
<rect x="16.2" y="37.3" width="16.6" height="2.5" rx="1.2" fill="#24262C"/>
<rect x="8" y="9" width="33" height="25.5" rx="3.6" fill="#282A30"/>
<rect x="9.8" y="10.8" width="29.4" height="20.4" rx="2" fill="url(#dpA)"/>
<rect x="9.8" y="10.8" width="29.4" height="20.4" rx="2" fill="url(#dpB)"/>
<path d="M25.5,17.5L22.5,22L26,26.5" fill="none" stroke="#163018" stroke-width="1.2" opacity="0.4"/>
</svg></div><span class="tx">显示</span></div>
<div class="sitem" style="top:316px"><div class="ic"><svg width="100%" height="100%" viewBox="0 0 48 48"><defs><filter id="daS" x="-20%" y="-20%" width="140%" height="150%"><feGaussianBlur stdDeviation="1"/></filter></defs>
<rect x="9.9" y="9" width="28.8" height="22" rx="2.5" fill="#8090D0" opacity="0.25" filter="url(#daS)"/>
<rect x="9.9" y="7.8" width="28.8" height="22" rx="2.5" fill="#FCFDFF"/>
<path d="M9.9,14.5V10.3a2.5,2.5 0 0 1 2.5,-2.5H36.2a2.5,2.5 0 0 1 2.5,2.5V14.5Z" fill="#BDD2F5"/>
<rect x="26.4" y="19.2" width="19.7" height="18.3" rx="2.5" fill="#8090D0" opacity="0.25" filter="url(#daS)"/>
<rect x="26.4" y="18" width="19.7" height="18.3" rx="2.5" fill="#FCFDFF"/>
<path d="M26.4,23V20.5a2.5,2.5 0 0 1 2.5,-2.5H43.6a2.5,2.5 0 0 1 2.5,2.5V23Z" fill="#B8D2F6"/>
<path d="M28,34H44.5" stroke="#C5D8F4" stroke-width="1.6"/>
<rect x="5.7" y="23.2" width="18.3" height="20.3" rx="2.5" fill="#8090D0" opacity="0.3" filter="url(#daS)"/>
<rect x="5.7" y="21.9" width="18.3" height="20.3" rx="2.5" fill="#FBFCFF"/>
<path d="M5.7,26.2V24.4a2.5,2.5 0 0 1 2.5,-2.5H21.5a2.5,2.5 0 0 1 2.5,2.5V26.2Z" fill="#2988EE"/>
<path d="M11.3,31.7L15.3,35.6L21.6,28" fill="none" stroke="#1380F0" stroke-width="3" stroke-linecap="round" stroke-linejoin="round"/>
<path d="M7,40.5H22.5" stroke="#C8D6F2" stroke-width="1.4"/>
</svg></div><span class="tx">默认程序</span></div>
<div class="sitem" style="top:376px"><div class="ic"><svg width="100%" height="100%" viewBox="0 0 48 48"><defs><linearGradient id="plA" x1="0" y1="0" x2="0" y2="1"><stop offset="0" stop-color="#946A55"/><stop offset="0.5" stop-color="#80573F"/><stop offset="1" stop-color="#6A4232"/></linearGradient>
<filter id="plS" x="-20%" y="-20%" width="140%" height="150%"><feGaussianBlur stdDeviation="1.2"/></filter></defs>
<circle cx="24.5" cy="25.4" r="16.3" fill="#C08060" opacity="0.4" filter="url(#plS)"/>
<circle cx="24.5" cy="23.6" r="16.5" fill="url(#plA)"/>
<circle cx="16.2" cy="16.9" r="3.1" fill="#F6B220"/>
<circle cx="22.2" cy="13.6" r="3" fill="#E6C2B4"/>
<circle cx="13.4" cy="25" r="3.3" fill="#3AA2F2"/>
<circle cx="31.4" cy="30.3" r="3.6" fill="#F0214C"/>
<path d="M26.6,20.6C29.5,24 27.5,29 23.5,32.6C22,33.8 20,33.4 19.6,32C19.2,28 21,22 26.6,20.6Z" fill="#FEFEFE"/>
<path d="M33.1,6.6L28.2,17.4" stroke="#101014" stroke-width="2.4" stroke-linecap="round"/>
<ellipse cx="26.6" cy="19.6" rx="2.7" ry="1.9" transform="rotate(25 26.6 19.6)" fill="#2A1408"/>
</svg></div><span class="tx">个性化</span></div>
<div class="sitem sel" style="top:436px"><div class="ic"><svg width="100%" height="100%" viewBox="0 0 48 48"><defs><radialGradient id="nwA" cx="0.4" cy="0.3" r="0.8"><stop offset="0" stop-color="#7CEDB8"/><stop offset="0.5" stop-color="#3DD69A"/><stop offset="1" stop-color="#1FB4A6"/></radialGradient><clipPath id="nwC"><circle cx="25.3" cy="24.3" r="16.8"/></clipPath></defs>
<circle cx="25.3" cy="24.3" r="16.8" fill="url(#nwA)"/>
<g clip-path="url(#nwC)" fill="none" stroke="#F2FFFF" stroke-width="0.95" stroke-opacity="0.92" stroke-linejoin="round">
<path d="M25,13.4L24.3,41.2M25,13.4L14.5,34.5M25,13.4L35.6,37.7M21.5,12.4L13,12.7M21.5,12.4L25,13.4L34.2,15.9L41.5,19.7L41.2,28.2L35.6,37.7L24.3,41.2L19.5,40L14.5,34.5"/>
<path d="M41.5,19.7L13,24.3M41.2,28.2L14.5,34.5M21.5,12.4L31,30L41.2,28.2M13,12.7L22,22L24.6,28M34.2,15.9L27,24L19.5,40M14.5,34.5L35.6,37.7M31,30L24.3,41.2M13,24.3L22,22L34.2,15.9M31,30L35.6,37.7"/>
</g>
<circle cx="25" cy="13.6" r="1.6" fill="#fff" opacity="0.9"/><circle cx="22.8" cy="18" r="1.2" fill="#fff" opacity="0.8"/><circle cx="24.6" cy="28" r="1.2" fill="#fff" opacity="0.8"/>
</svg></div><span class="tx">网络</span></div>
<div class="sitem" style="top:496px"><div class="ic"><svg width="100%" height="100%" viewBox="0 0 48 48"><defs><linearGradient id="blA" x1="0" y1="0" x2="1" y2="0"><stop offset="0" stop-color="#84848E"/><stop offset="0.22" stop-color="#A8A8A6"/><stop offset="0.5" stop-color="#DEDEE4"/><stop offset="0.78" stop-color="#ACACAC"/><stop offset="1" stop-color="#8A8A94"/></linearGradient>
<linearGradient id="blB" x1="0" y1="0" x2="0" y2="1"><stop offset="0.45" stop-color="#000" stop-opacity="0"/><stop offset="1" stop-color="#303044" stop-opacity="0.4"/></linearGradient>
<linearGradient id="blD" x1="0" y1="0" x2="1" y2="0"><stop offset="0" stop-color="#62626C"/><stop offset="0.3" stop-color="#34343E"/><stop offset="0.75" stop-color="#40404C"/><stop offset="1" stop-color="#66666E"/></linearGradient>
<filter id="blS" x="-20%" y="-50%" width="140%" height="200%"><feGaussianBlur stdDeviation="1.2"/></filter></defs>
<ellipse cx="24" cy="38.8" rx="15" ry="2.6" fill="#404060" opacity="0.3" filter="url(#blS)"/>
<ellipse cx="24" cy="34.4" rx="16.2" ry="4.4" fill="url(#blD)"/>
<ellipse cx="24.6" cy="35" rx="5.6" ry="3.4" fill="#B2B2C8"/>
<path d="M21.6,8.6C21.6,6.4 26.6,6.4 26.6,8.6V10H21.6Z" fill="#8E8E7C"/>
<path d="M24,8.4C30.5,8.4 34.2,13 34.8,19C35.3,24.5 35.6,28 38.6,32.4C33,30.2 15,30.2 9.4,32.4C12.4,28 12.7,24.5 13.2,19C13.8,13 17.5,8.4 24,8.4Z" fill="url(#blA)"/>
<path d="M24,8.4C30.5,8.4 34.2,13 34.8,19C35.3,24.5 35.6,28 38.6,32.4C33,30.2 15,30.2 9.4,32.4C12.4,28 12.7,24.5 13.2,19C13.8,13 17.5,8.4 24,8.4Z" fill="url(#blB)"/>
</svg></div><span class="tx">通知</span></div>
<div class="sitem" style="top:556px"><div class="ic"><svg width="100%" height="100%" viewBox="0 0 48 48"><defs><linearGradient id="sdA" x1="0" y1="0" x2="1" y2="1"><stop offset="0" stop-color="#14141C"/><stop offset="0.45" stop-color="#2E2E3A"/><stop offset="1" stop-color="#5C5C6C"/></linearGradient>
<linearGradient id="sdB" x1="0" y1="0" x2="1" y2="1"><stop offset="0" stop-color="#E8E8EE"/><stop offset="1" stop-color="#A8A8B4"/></linearGradient>
<filter id="sdS" x="-20%" y="-20%" width="140%" height="140%"><feGaussianBlur stdDeviation="1.3"/></filter></defs>
<ellipse cx="26" cy="30" rx="17" ry="8" transform="rotate(58 26 30)" fill="#505070" opacity="0.28" filter="url(#sdS)"/>
<ellipse cx="19" cy="28" rx="10" ry="7" transform="rotate(58 19 28)" fill="url(#sdB)"/>
<path d="M14.6,21.4C13.4,27 17,33.6 23.4,34.6" fill="none" stroke="#1A1A30" stroke-width="1.5" stroke-linecap="round"/>
<ellipse cx="29.2" cy="22.6" rx="17.6" ry="8.6" transform="rotate(58 29.2 22.6)" fill="#F4F4F8"/>
<ellipse cx="30.6" cy="21.4" rx="17" ry="7.6" transform="rotate(58 30.6 21.4)" fill="url(#sdA)"/>
<ellipse cx="27.4" cy="24.4" rx="7" ry="3.6" transform="rotate(58 27.4 24.4)" fill="#9A9AA6" opacity="0.85"/>
</svg></div><span class="tx">声音</span></div>
<div class="sitem" style="top:616px"><div class="ic"><svg width="100%" height="100%" viewBox="0 0 48 48"><defs><filter id="ckS" x="-20%" y="-20%" width="140%" height="140%"><feGaussianBlur stdDeviation="1.2"/></filter></defs>
<circle cx="24.1" cy="25.400000000000002" r="18" fill="#404060" opacity="0.3" filter="url(#ckS)"/>
<circle cx="24.1" cy="23.8" r="17.3" fill="#FCFCFE" stroke="#666664" stroke-width="2.6"/>
<path d="M29.90,13.75L31.10,11.68M34.15,18.00L36.22,16.80M34.15,29.60L36.22,30.80M29.90,33.85L31.10,35.92M18.30,33.85L17.10,35.92M14.05,29.60L11.98,30.80M14.05,18.00L11.98,16.80M18.30,13.75L17.10,11.68" stroke="#2C2C30" stroke-width="1.5" stroke-linecap="round" fill="none"/>
<path d="M23.8,25L21.6,19.8" stroke="#3A3A3C" stroke-width="1.8" stroke-linecap="round"/>
<path d="M24,25.2H31.6" stroke="#E23A5E" stroke-width="1.7" stroke-linecap="round"/>
</svg></div><span class="tx">时间日期</span></div>
<div class="sitem" style="top:676px"><div class="ic"><svg width="100%" height="100%" viewBox="0 0 48 48"><defs><linearGradient id="btA" x1="0" y1="0" x2="0" y2="1"><stop offset="0" stop-color="#A8DE28"/><stop offset="0.45" stop-color="#7CCC14"/><stop offset="1" stop-color="#4EB410"/></linearGradient>
<linearGradient id="btB" x1="0" y1="0" x2="0" y2="1"><stop offset="0" stop-color="#6C6C7A"/><stop offset="0.3" stop-color="#54545E"/><stop offset="1" stop-color="#46464E"/></linearGradient>
<clipPath id="btC"><rect x="6.6" y="12.7" width="31.4" height="21.1" rx="4.6"/></clipPath>
<filter id="btS" x="-20%" y="-30%" width="140%" height="170%"><feGaussianBlur stdDeviation="1.1"/></filter></defs>
<rect x="7" y="15" width="31" height="21.4" rx="5" fill="#506030" opacity="0.35" filter="url(#btS)"/>
<rect x="38" y="19.4" width="3.6" height="7.8" rx="1.6" fill="#D0D0D4"/>
<rect x="5.9" y="12" width="32.8" height="22.5" rx="5.2" fill="#36401E"/>
<g clip-path="url(#btC)"><rect x="6" y="12" width="22" height="23" fill="url(#btA)"/><rect x="28" y="12" width="11" height="23" fill="url(#btB)"/><rect x="26.8" y="12" width="1.4" height="23" fill="#C8E870" opacity="0.7"/></g>
</svg></div><span class="tx">电源管理</span></div>
<div class="sitem" style="top:736px"><div class="ic"><svg width="100%" height="100%" viewBox="0 0 48 48"><defs><linearGradient id="msA" x1="0" y1="0" x2="0" y2="1"><stop offset="0" stop-color="#B2B2B4"/><stop offset="0.35" stop-color="#8C8C90"/><stop offset="1" stop-color="#5C5C66"/></linearGradient>
<filter id="msS" x="-20%" y="-20%" width="140%" height="140%"><feGaussianBlur stdDeviation="1.1"/></filter></defs>
<g transform="translate(24,23) rotate(-48)">
<rect x="-11.4" y="-17" width="22.8" height="37" rx="11.4" fill="#404058" opacity="0.3" filter="url(#msS)"/>
<rect x="-11.6" y="-18.8" width="23.2" height="37.6" rx="11.2" fill="url(#msA)"/>
<path d="M-11.6,-5H11.6M0,-18.6V-5" stroke="#3C3C44" stroke-width="1.5" fill="none" opacity="0.85"/>
</g></svg></div><span class="tx">鼠标</span></div>

<!-- middle column -->
<div class="mitem sel" style="top:89px"><div class="ic"><svg width="100%" height="100%" viewBox="0 0 34 34"><rect x="6" y="7" width="22" height="20" rx="1.8" fill="#FDFDFF"/><path d="M10.5,22V14.3H12.8V12H15.5V10.6H17.9V12H21.1V14.3H23V22Z" fill="#0081FF"/></svg></div><span class="tx">有线<span style="font-family:'Noto Sans CJK SC',sans-serif">…</span></span><span class="rt">获取地址中</span></div>
<div class="mitem" style="top:161.7px"><div class="ic" style="top:11.8px"><svg width="100%" height="100%" viewBox="0 0 34 34"><path d="M19.6,5.8C13,7.4 6.4,9.6 6.4,13C6.4,16.6 17,15.8 21.4,17.4C23.4,18.2 23.6,19.6 23.6,21.8" fill="none" stroke="#2C9CC2" stroke-width="1.9" stroke-linecap="round"/><rect x="19.3" y="21.4" width="7.5" height="7.7" rx="1.4" fill="#1C9EEC"/></svg></div><span class="tx" style="top:2.6px">DSL</span></div>
<div class="mitem" style="top:234.4px"><div class="ic" style="top:11.6px"><svg width="100%" height="100%" viewBox="0 0 34 34"><rect x="4.2" y="4.2" width="25" height="25.3" rx="4.2" fill="#24A5DC"/><text x="16.8" y="19.7" text-anchor="middle" font-family="Liberation Sans, sans-serif" font-size="8.6" fill="#F2FBFF" letter-spacing="0.1">VPN</text></svg></div><span class="tx" style="top:1.9px">VPN</span></div>
<div class="mitem" style="top:307.1px"><div class="ic" style="top:11.4px"><svg width="100%" height="100%" viewBox="0 0 34 34"><defs><clipPath id="spC"><circle cx="17" cy="16.5" r="14"/></clipPath></defs><circle cx="17" cy="16.5" r="14" fill="#23A3DE"/><g clip-path="url(#spC)" stroke="#F4FCFF" stroke-width="1.5" fill="none"><path d="M23.5,-1.2L3.1,30.6M9.9,-1.2L30.3,30.6M0,20H34"/></g><circle cx="16.7" cy="9.4" r="3.3" fill="#FCFEFF"/><circle cx="9.9" cy="20" r="3.3" fill="#FCFEFF"/><circle cx="23.5" cy="20" r="3.3" fill="#FCFEFF"/></svg></div><span class="tx">系统代理</span><span class="rt">已禁用</span></div>
<div class="mitem" style="top:379.8px"><div class="ic" style="top:11.2px"><svg width="100%" height="100%" viewBox="0 0 34 34"><circle cx="16.7" cy="16.9" r="13.3" fill="#FBFDFF" stroke="#2A96D4" stroke-width="1.5"/><circle cx="16.7" cy="9.7" r="3.5" fill="#23A3DE"/><circle cx="10.5" cy="20.8" r="3.5" fill="#23A3DE"/><circle cx="23.2" cy="20.8" r="3.5" fill="#23A3DE"/></svg></div><span class="tx">应用代理</span></div>
<div class="mitem" style="top:452.5px"><div class="ic" style="top:11.0px"><svg width="100%" height="100%" viewBox="0 0 34 34"><circle cx="16.6" cy="16.3" r="12.4" fill="#23A3DE"/><circle cx="16.7" cy="9.5" r="1.75" fill="#fff"/><rect x="15.45" y="14.6" width="2.5" height="10.8" rx="1.2" fill="#fff"/></svg></div><span class="tx">网络详情</span></div>

<!-- right panel -->
<div class="abs" style="left:561.5px;top:90.8px;line-height:42px;font-size:21.3px;font-weight:700;color:#2E3646">有线网卡</div>
<div class="abs" style="left:924px;top:95px;width:63px;height:30px;border-radius:9px;background:#DEDEDF"><div class="abs" style="left:25px;top:0;width:38px;height:30px;border-radius:9px;background:#0081FF"></div></div>
<div class="abs" style="left:549px;top:144.5px;width:448px;height:48px;border-radius:10px;background:#F3F3F6;line-height:48px"><span class="abs" style="left:14.2px;top:1.2px">有线连接</span>
<svg class="abs" style="left:412px;top:8px" width="32" height="32" viewBox="0 0 32 32"><circle cx="10.41" cy="7.12" r="2.0" fill="#2A8CF4" opacity="0.10"/><circle cx="12.29" cy="6.17" r="2.3" fill="#2A8CF4" opacity="0.16"/><circle cx="14.34" cy="5.68" r="2.6" fill="#2A8CF4" opacity="0.24"/><circle cx="16.44" cy="5.65" r="2.9" fill="#2A8CF4" opacity="0.34"/><circle cx="18.50" cy="6.10" r="3.2" fill="#0A7CF0"/><circle cx="11.58" cy="23.00" r="2.0" fill="#2A8CF4" opacity="0.10"/><circle cx="9.86" cy="21.91" r="2.3" fill="#2A8CF4" opacity="0.16"/><circle cx="8.42" cy="20.47" r="2.6" fill="#2A8CF4" opacity="0.24"/><circle cx="7.35" cy="18.73" r="2.9" fill="#2A8CF4" opacity="0.34"/><circle cx="6.70" cy="16.80" r="3.2" fill="#0A7CF0"/><circle cx="24.63" cy="14.42" r="2.0" fill="#2A8CF4" opacity="0.10"/><circle cx="24.51" cy="16.49" r="2.3" fill="#2A8CF4" opacity="0.16"/><circle cx="23.92" cy="18.47" r="2.6" fill="#2A8CF4" opacity="0.24"/><circle cx="22.90" cy="20.27" r="2.9" fill="#2A8CF4" opacity="0.34"/><circle cx="21.50" cy="21.80" r="3.2" fill="#0A7CF0"/></svg></div>
<div class="abs" style="left:747px;top:709px;width:55px;height:55px;border-radius:50%;background:#0A85FC;box-shadow:0 4px 8px rgba(0,90,200,0.35)">
<svg width="55" height="55" viewBox="0 0 55 55"><path d="M15,27.5H40M27.5,15V40" stroke="#fff" stroke-width="2.2" fill="none"/></svg></div>
</div>

<svg class="abs" style="left:1428px;top:650px" width="28" height="30" viewBox="0 0 28 30"><polygon points="6.4,5 19.2,18.4 15.2,24.2 6.4,24.2" fill="#0a0a0a" stroke="#fff" stroke-width="1.1" stroke-linejoin="miter"/></svg>
</body></html>
